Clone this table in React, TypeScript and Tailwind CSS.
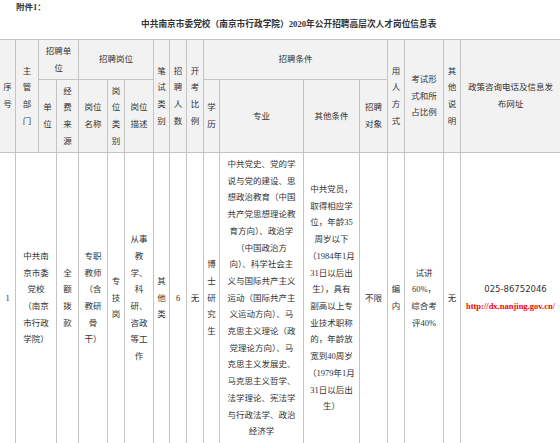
import clsx from "clsx";

const line = "border-[#c4c4c4]";

type CellProps = {
  lines: string[];
  className?: string;
  head?: boolean;
  last?: boolean;
};

const Cell = ({ lines, className, head, last }: CellProps) => {
  return (
    <div
      className={clsx(
        "flex flex-col items-center justify-center border-b text-center whitespace-nowrap",
        line,
        last ? "border-r-0" : "border-r",
        head && "bg-[#f2f2f2]",
        className
      )}
    >
      {lines.map((l, i) => (
        <span key={i} className="leading-[16.7px]">
          {l}
        </span>
      ))}
    </div>
  );
};

const major = [
  "中共党史、党的学",
  "说与党的建设、思",
  "想政治教育（中国",
  "共产党思想理论教",
  "育方向）、政治学",
  "（中国政治方",
  "向）、科学社会主",
  "义与国际共产主义",
  "运动（国际共产主",
  "义运动方向）、马",
  "克思主义理论（政",
  "党理论方向）、马",
  "克思主义发展史、",
  "马克思主义哲学、",
  "法学理论、宪法学",
  "与行政法学、政治",
  "经济学",
];

const other = [
  "中共党员，",
  "取得相应学",
  "位，年龄35",
  "周岁以下",
  "（1984年1月",
  "31日以后出",
  "生），具有",
  "副高以上专",
  "业技术职称",
  "的，年龄放",
  "宽到40周岁",
  "（1979年1月",
  "31日以后出",
  "生）",
];

export default function App() {
  return (
    <div className="h-[443px] w-[560px] overflow-hidden bg-white text-[#333] font-['Liberation_Serif','Noto_Sans_CJK_SC',serif] text-[8.5px]">
      {/* heading */}
      <div className="pl-[16px] leading-[15px] font-bold">附件1：</div>
      <div className="pl-[141px] leading-[18px] mb-[6px] font-bold text-[8.7px]">
        中共南京市委党校（南京市行政学院）2020年公开招聘高层次人才岗位信息表
      </div>

      {/* table */}
      <div
        className={clsx(
          "grid w-[560px] border-t grid-cols-[16px_23px_18px_22px_29px_17px_29px_16px_17px_17px_16px_84px_56px_28px_17px_39px_17px_99px] grid-rows-[40px_73px_291px]",
          line
        )}
      >
        {/* header row 1 */}
        <Cell head className="row-span-2" lines={["序", "号"]} />
        <Cell head className="row-span-2" lines={["主", "管", "部", "门"]} />
        <Cell head className="col-span-2" lines={["招聘单", "位"]} />
        <Cell head className="col-span-3" lines={["招聘岗位"]} />
        <Cell head className="row-span-2" lines={["笔", "试", "类", "别"]} />
        <Cell head className="row-span-2" lines={["招", "聘", "人", "数"]} />
        <Cell head className="row-span-2" lines={["开", "考", "比", "例"]} />
        <Cell head className="col-span-4" lines={["招聘条件"]} />
        <Cell head className="row-span-2" lines={["用", "人", "方", "式"]} />
        <Cell head className="row-span-2" lines={["考试形", "式和所", "占比例"]} />
        <Cell head className="row-span-2" lines={["其", "他", "说", "明"]} />
        <Cell
          head
          last
          className="row-span-2"
          lines={["政策咨询电话及信息发", "布网址"]}
        />

        {/* header row 2 */}
        <Cell head lines={["单", "位"]} />
        <Cell head lines={["经", "费", "来", "源"]} />
        <Cell head lines={["岗位", "名称"]} />
        <Cell head lines={["岗", "位", "类", "别"]} />
        <Cell head lines={["岗位", "描述"]} />
        <Cell head lines={["学", "历"]} />
        <Cell head lines={["专业"]} />
        <Cell head lines={["其他条件"]} />
        <Cell head lines={["招聘", "对象"]} />

        {/* body */}
        <Cell lines={["1"]} />
        <Cell
          className="col-span-2"
          lines={["中共南", "京市委", "党校", "（南京", "市行政", "学院）"]}
        />
        <Cell lines={["全", "额", "拨", "款"]} />
        <Cell lines={["专职", "教师", "（含", "教研", "骨", "干）"]} />
        <Cell lines={["专", "技", "岗"]} />
        <Cell lines={["从事", "教", "学、", "科", "研、", "咨政", "等工", "作"]} />
        <Cell lines={["其", "他", "类"]} />
        <Cell lines={["6"]} />
        <Cell lines={["无"]} />
        <Cell lines={["博", "士", "研", "究", "生"]} />
        <Cell lines={major} />
        <Cell lines={other} />
        <Cell lines={["不限"]} />
        <Cell lines={["编", "内"]} />
        <Cell lines={["试讲", "60%，", "综合考", "评40%"]} />
        <Cell lines={["无"]} />
        <div className="flex flex-col items-center justify-center border-b border-[#c4c4c4] whitespace-nowrap">
          <span className="pl-[10px] leading-[16.7px] font-['DejaVu_Sans',sans-serif]">
            025-86752046
          </span>
          <span className="leading-[16.7px] font-bold text-[#ff0000]">
            http://dx.nanjing.gov.cn/
          </span>
        </div>
      </div>
    </div>
  );
}
